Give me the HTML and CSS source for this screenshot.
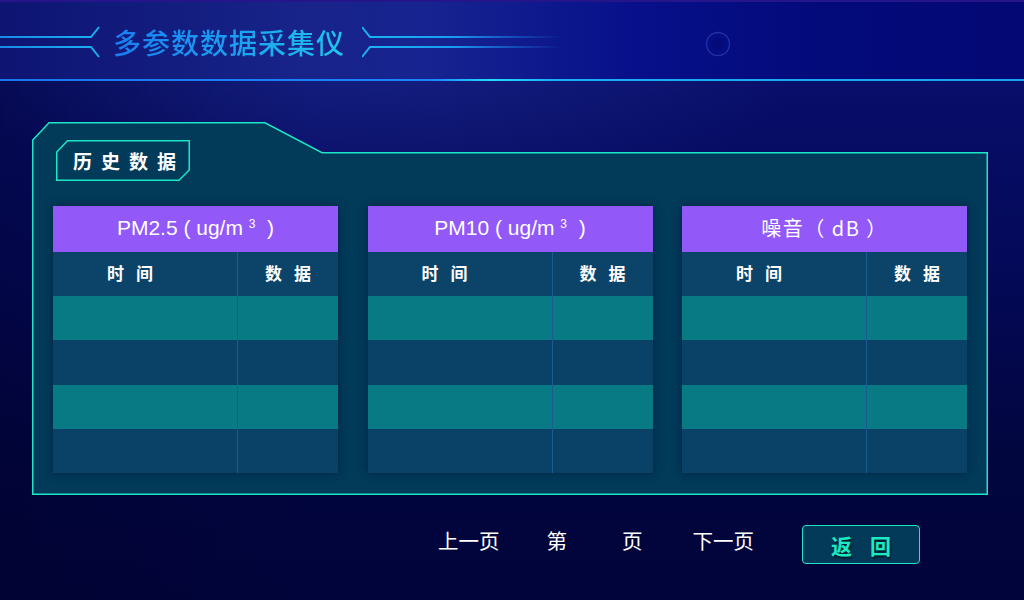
FILE: index.html
```html
<!DOCTYPE html>
<html lang="zh-CN">
<head>
<meta charset="utf-8">
<title>多参数数据采集仪</title>
<link rel="stylesheet" href="styles.css">
</head>
<body>
<header class="top">
  <div class="brand">
    <svg class="deco-l" width="100" height="79" viewBox="0 0 100 79">
      <defs>
        <linearGradient id="gl" x1="0" x2="1" y1="0" y2="0">
          <stop offset="0" stop-color="#1a8ae8"/>
          <stop offset="1" stop-color="#1ab0f0"/>
        </linearGradient>
      </defs>
      <polyline points="0,37 91,37 99,27" fill="none" stroke="url(#gl)" stroke-width="2"/>
      <polyline points="0,47 91,47 99,57" fill="none" stroke="url(#gl)" stroke-width="2"/>
    </svg>
    <h1 class="title">多参数数据采集仪</h1>
    <svg class="deco-r" width="200" height="79" viewBox="0 0 200 79">
      <defs>
        <linearGradient id="gr" x1="0" x2="1" y1="0" y2="0">
          <stop offset="0" stop-color="#1ab4f2"/>
          <stop offset="0.45" stop-color="#1a9ef0"/>
          <stop offset="1" stop-color="#1a80f0" stop-opacity="0"/>
        </linearGradient>
      </defs>
      <polyline points="0,27 8,37 200,37" fill="none" stroke="url(#gr)" stroke-width="2"/>
      <polyline points="0,57 8,47 200,47" fill="none" stroke="url(#gr)" stroke-width="2"/>
    </svg>
    <svg class="ring" width="28" height="28" viewBox="0 0 28 28">
      <circle cx="14" cy="14" r="11.5" fill="none" stroke="#2a3cb0" stroke-width="1.4" opacity="0.75"/>
      <circle cx="14" cy="14" r="6" fill="rgba(2,6,100,0.35)"/>
    </svg>
  </div>
</header>
<div class="hline"></div>

<main class="main">
  <section class="panel">
    <svg class="panel-frame" width="956" height="373" viewBox="0 0 956 373">
      <polygon points="0.75,18 17,0.75 233,0.75 290,30.75 955.25,30.75 955.25,372.25 0.75,372.25" fill="#023a5a" stroke="#1de6c6" stroke-width="1.5"/>
    </svg>
    <div class="tab">
      <svg class="tab-frame" width="134" height="41" viewBox="0 0 134 41">
        <polygon points="0.75,12 11.5,0.75 133.25,0.75 133.25,30 123,40.25 0.75,40.25" fill="#023a5a" stroke="#1de6c6" stroke-width="1.5"/>
      </svg>
      <span class="tab-text">历史数据</span>
    </div>

    <div class="tables">
      <div class="tbl">
        <div class="tbl-title">PM2.5 ( ug/m <span class="sup">3</span>  )</div>
        <div class="row row-head"><div class="c1">时间</div><div class="c2">数据</div></div>
        <div class="row row-teal"><div class="c1"></div><div class="c2"></div></div>
        <div class="row row-dark"><div class="c1"></div><div class="c2"></div></div>
        <div class="row row-teal"><div class="c1"></div><div class="c2"></div></div>
        <div class="row row-dark"><div class="c1"></div><div class="c2"></div></div>
      </div>
      <div class="tbl">
        <div class="tbl-title">PM10 ( ug/m <span class="sup">3</span>  )</div>
        <div class="row row-head"><div class="c1">时间</div><div class="c2">数据</div></div>
        <div class="row row-teal"><div class="c1"></div><div class="c2"></div></div>
        <div class="row row-dark"><div class="c1"></div><div class="c2"></div></div>
        <div class="row row-teal"><div class="c1"></div><div class="c2"></div></div>
        <div class="row row-dark"><div class="c1"></div><div class="c2"></div></div>
      </div>
      <div class="tbl">
        <div class="tbl-title cjk">噪音（ dB ）</div>
        <div class="row row-head"><div class="c1">时间</div><div class="c2">数据</div></div>
        <div class="row row-teal"><div class="c1"></div><div class="c2"></div></div>
        <div class="row row-dark"><div class="c1"></div><div class="c2"></div></div>
        <div class="row row-teal"><div class="c1"></div><div class="c2"></div></div>
        <div class="row row-dark"><div class="c1"></div><div class="c2"></div></div>
      </div>
    </div>
  </section>
</main>

<nav class="pager">
  <span class="pg prev">上一页</span>
  <span class="pg di">第</span>
  <span class="pg num"></span>
  <span class="pg ye">页</span>
  <span class="pg next">下一页</span>
  <button class="back">返回</button>
</nav>
</body>
</html>
```

FILE: styles.css
```css
* { box-sizing: border-box; }

html, body {
  margin: 0;
  padding: 0;
}

body {
  width: 1024px;
  height: 600px;
  overflow: hidden;
  font-family: "Noto Sans CJK SC", "Liberation Sans", sans-serif;
  color: #fff;
  background:
    radial-gradient(ellipse 420px 160px at 380px 60px, rgba(50, 70, 180, 0.3), rgba(50, 70, 180, 0) 100%),
    linear-gradient(90deg, rgba(0, 0, 40, 0.35) 0%, rgba(0, 0, 40, 0) 30%, rgba(0, 0, 40, 0) 100%),
    linear-gradient(180deg, #0b1272 0%, #070d66 20%, #040958 45%, #02063f 75%, #01043a 100%);
}

/* ---------- header ---------- */
.top {
  height: 79px;
  background:
    linear-gradient(90deg, #0d1472 0%, #18248a 30%, #172390 42%, #07108a 62%, #030a7a 80%, #030874 100%);
  border-top: 2px solid #24168a;
}

.brand {
  display: flex;
  align-items: flex-start;
  height: 77px;
  margin-top: -2px;
}

.deco-l, .deco-r {
  display: block;
  flex: none;
}

.title {
  margin: 22px 0 0 13px;
  font-size: 28px;
  line-height: 40px;
  font-weight: 500;
  letter-spacing: 1px;
  width: 236px;
  background: linear-gradient(90deg, #1a7ef2 0%, #1a9cf0 45%, #20c8ec 100%);
  -webkit-background-clip: text;
  background-clip: text;
  color: transparent;
  white-space: nowrap;
}

.deco-r {
  margin-left: 13px;
}

.ring {
  flex: none;
  margin: 30px 0 0 142px;
}

.hline {
  height: 2px;
  background: linear-gradient(90deg, #1a76ee 0%, #1a84fc 42%, #22dcff 48%, #1ab0f8 54%, #16a6ee 100%);
}

/* ---------- panel ---------- */
.main {
  padding: 41px 0 0 32px;
}

.panel {
  position: relative;
  width: 956px;
  height: 373px;
  padding: 18px 21px 0 21px;
}

.panel-frame {
  position: absolute;
  left: 0;
  top: 0;
  z-index: 0;
}

.tab {
  position: relative;
  z-index: 1;
  width: 134px;
  height: 41px;
  margin-left: 3px;
  display: flex;
  align-items: center;
  padding-left: 17px;
}

.tab-frame {
  position: absolute;
  left: 0;
  top: 0;
}

.tab-text {
  position: relative;
  font-size: 19px;
  font-weight: 700;
  letter-spacing: 9px;
  line-height: 24px;
  color: #fff;
}

.tables {
  position: relative;
  z-index: 1;
  margin-top: 25px;
  display: flex;
  justify-content: space-between;
}

.tbl {
  width: 285px;
  box-shadow: 0 0 8px rgba(0, 25, 50, 0.6);
}

.tbl-title {
  height: 46px;
  background: #9258f8;
  display: flex;
  align-items: center;
  justify-content: center;
  font-family: "Liberation Sans", "Noto Sans CJK SC", sans-serif;
  font-size: 21px;
  color: #fff;
  white-space: pre;
  padding-bottom: 2px;
}

.tbl-title .sup {
  font-size: 12px;
  position: relative;
  top: -4px;
}

.tbl-title.cjk {
  font-family: "Noto Sans CJK SC", sans-serif;
  font-size: 20px;
  letter-spacing: 1.5px;
  padding-bottom: 4px;
}

.row {
  display: grid;
  grid-template-columns: 184px 1fr;
  height: 44.2px;
}

.row .c2 {
  border-left: 1px solid #1c5b92;
}

.row-head {
  background: #0b4468;
}

.row-teal {
  background: #077a84;
}

.row-dark {
  background: #0a4267;
}

.row-head .c1,
.row-head .c2 {
  display: flex;
  align-items: center;
  justify-content: center;
  font-size: 17px;
  font-weight: 700;
  letter-spacing: 12px;
  color: #fff;
  padding-bottom: 3px;
}

.row-head .c1 {
  padding-right: 18px;
}

.row-head .c2 {
  padding-left: 12px;
}

/* ---------- pager ---------- */
.pager {
  display: flex;
  align-items: center;
  margin-top: 30px;
  padding-left: 438px;
  height: 39px;
}

.pg {
  font-size: 20.5px;
  line-height: 28px;
  color: #fff;
  margin-top: -9px;
}

.di { margin-left: 47px; }
.num { width: 55px; }
.ye { margin-left: 0; }
.next { margin-left: 50px; }

.back {
  margin-left: 48px;
  width: 118px;
  height: 39px;
  border: 1.5px solid #1de6c6;
  border-radius: 4px;
  background: #033a5a;
  font-family: "Noto Sans CJK SC", sans-serif;
  font-size: 21px;
  font-weight: 700;
  letter-spacing: 18px;
  padding: 0 0 0 18px;
  color: #1de8c4;
  text-shadow: 1px 2px 2px rgba(0, 0, 0, 0.6);
}
```
